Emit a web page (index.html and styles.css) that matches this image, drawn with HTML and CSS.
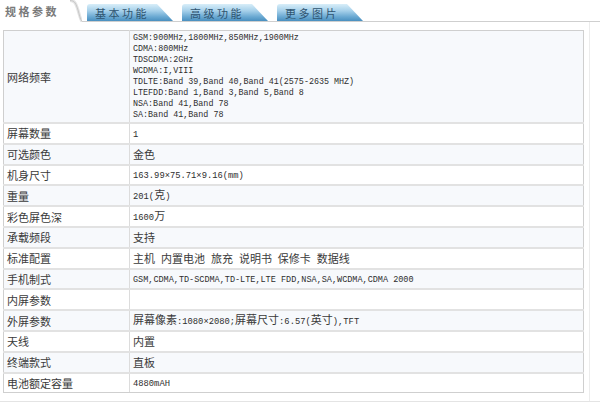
FILE: index.html
```html
<!DOCTYPE html>
<html lang="zh">
<head>
<meta charset="utf-8">
<title>规格参数</title>
<link rel="stylesheet" href="styles.css">
</head>
<body>
<div class="tabs">
  <div class="tab-active">规格参数</div>
  <svg class="tab-curve" width="12" height="22" viewBox="0 0 12 22"><path d="M0 0.5 C5 0.5 6 4 8 10 C9.5 15 10 19 12 21.5" fill="none" stroke="#e4e4e4" stroke-width="3"/><path d="M0 0.5 C5 0.5 6 4 8 10 C9.5 15 10 19 12 21.5" fill="none" stroke="#c9c9c9" stroke-width="1"/></svg>
  <div class="tab-rest">
    <div class="tab">基本功能</div>
    <div class="tab">高级功能</div>
    <div class="tab">更多图片</div>
  </div>
</div>
<div class="panel">
  <table class="spec">
    <tr class="alt">
      <td class="label">网络频率</td>
      <td class="value multi"><span class="m">GSM:900MHz,1800MHz,850MHz,1900MHz<br>CDMA:800MHz<br>TDSCDMA:2GHz<br>WCDMA:I,VIII<br>TDLTE:Band 39,Band 40,Band 41(2575-2635 MHZ)<br>LTEFDD:Band 1,Band 3,Band 5,Band 8<br>NSA:Band 41,Band 78<br>SA:Band 41,Band 78</span></td>
    </tr>
    <tr><td class="label">屏幕数量</td><td class="value"><span class="m">1</span></td></tr>
    <tr class="alt"><td class="label">可选颜色</td><td class="value">金色</td></tr>
    <tr><td class="label">机身尺寸</td><td class="value"><span class="m">163.99×75.71×9.16(mm)</span></td></tr>
    <tr class="alt"><td class="label">重量</td><td class="value"><span class="m">201(</span>克<span class="m">)</span></td></tr>
    <tr><td class="label">彩色屏色深</td><td class="value"><span class="m">1600</span>万</td></tr>
    <tr class="alt"><td class="label">承载频段</td><td class="value">支持</td></tr>
    <tr><td class="label">标准配置</td><td class="value words">主机 内置电池 旅充 说明书 保修卡 数据线</td></tr>
    <tr class="alt"><td class="label">手机制式</td><td class="value"><span class="m narrow">GSM,CDMA,TD-SCDMA,TD-LTE,LTE FDD,NSA,SA,WCDMA,CDMA 2000</span></td></tr>
    <tr><td class="label">内屏参数</td><td class="value"></td></tr>
    <tr class="alt"><td class="label">外屏参数</td><td class="value">屏幕像素<span class="m">:1080×2080;</span>屏幕尺寸<span class="m">:6.57(</span>英寸<span class="m">),TFT</span></td></tr>
    <tr><td class="label">天线</td><td class="value">内置</td></tr>
    <tr class="alt"><td class="label">终端款式</td><td class="value">直板</td></tr>
    <tr><td class="label">电池额定容量</td><td class="value"><span class="m">4880mAH</span></td></tr>
  </table>
</div>
<div class="foot"></div>
</body>
</html>
```
FILE: styles.css
```css
html, body {
  margin: 0;
  padding: 0;
  background: #fff;
}
body {
  width: 600px;
  height: 405px;
  overflow: hidden;
  font-family: "Noto Sans CJK SC", sans-serif;
  color: #3a3a3a;
}
.tabs {
  display: flex;
  align-items: flex-end;
  height: 22px;
}
.tab-active {
  flex: none;
  width: 70px;
  height: 22px;
  padding-left: 5px;
  padding-bottom: 1px;
  box-sizing: border-box;
  display: flex;
  align-items: center;
  font-size: 11px;
  font-weight: bold;
  color: #7a7a7a;
  letter-spacing: 2.5px;
}
.tab-curve {
  display: block;
  flex: none;
}
.tab-rest {
  flex: 1;
  height: 22px;
  box-sizing: border-box;
  display: flex;
  align-items: flex-end;
  gap: 9px;
  padding-left: 5px;
  border-bottom: 1px solid #cfcfcf;
}
.tab {
  width: 86px;
  height: 17px;
  box-sizing: border-box;
  padding: 0 16px 0 0;
  display: flex;
  align-items: center;
  justify-content: center;
  font-size: 11px;
  letter-spacing: 2.5px;
  color: #2f5470;
  background: linear-gradient(#d8eef9 0%, #a6d0ea 40%, #6aa9d2 75%, #4a8fbf 100%);
  border-radius: 3px 0 0 0;
  clip-path: polygon(0 0, 70px 0, 100% 100%, 0 100%);
}
.panel {
  width: 586px;
  padding: 8px 0 8px 3px;
  border-right: 1px solid #ececec;
}
.spec {
  width: 581px;
  border-collapse: collapse;
  border: 1px solid #cfcfcf;
  font-size: 11px;
  color: #3a3a3a;
}
.spec td {
  border-bottom: 2px solid #e2e2e2;
  height: 18.8px;
  padding: 0;
  line-height: 14px;
  vertical-align: middle;
}
.spec tr:last-child td {
  border-bottom: 1px solid #cfcfcf;
}
.spec tr.alt td {
  background: #f7f9fc;
}
.label {
  width: 122px;
  padding-left: 3px !important;
  border-right: 1px solid #dcdcdc;
}
.value {
  padding-left: 3px !important;
}
.m {
  font-family: "Liberation Mono", monospace;
  font-size: 8.8px;
  color: #2e2e2e;
}
.m.narrow {
  font-size: 8.5px;
}
.multi {
  padding: 2px 3px 1px !important;
}
.multi .m {
  font-size: 8.4px;
  line-height: 11px;
  display: block;
}
.words {
  word-spacing: 3.5px;
}
.foot {
  border-top: 1px solid #e4e4e4;
}
```
